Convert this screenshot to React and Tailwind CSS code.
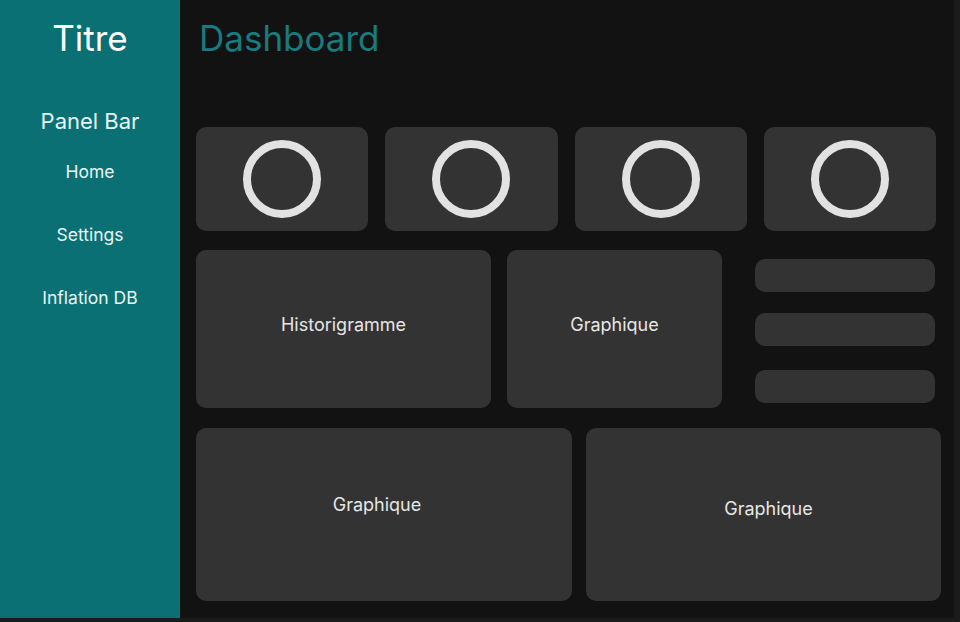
import React from "react";

const Ring = () => (
  <svg width="80" height="80" viewBox="0 0 80 80">
    <circle cx="40" cy="40" r="35" fill="none" stroke="#e2e2e2" strokeWidth="8" />
  </svg>
);

const Card = ({ className = "", children }) => (
  <div className={"bg-[#333333] rounded-[10px] flex items-center justify-center text-[18px] text-[#e6e6e6] " + className}>
    {children}
  </div>
);

export default function App() {
  const links = ["Home", "Settings", "Inflation DB"];

  return (
    <div className="w-[960px] h-[622px] bg-[#1b1b1b] overflow-hidden" style={{ fontFamily: "Inter, 'Noto Sans', sans-serif" }}>
      <div className="flex w-[954px] h-[618px] bg-[#121212]">
        {/* sidebar */}
        <div className="w-[180px] shrink-0 bg-[#0a7074] flex flex-col items-center text-white">
          <div className="mt-[17px] text-[35px] leading-[42px]">Titre</div>
          <div className="mt-[48px] text-[22px] leading-[28px] text-[#e8f4f4]">Panel Bar</div>
          <div className="mt-[25px] flex flex-col items-center gap-[39px] text-[17.5px] leading-[24px] text-[#e8f4f4]">
            {links.map((l) => (
              <div key={l}>{l}</div>
            ))}
          </div>
        </div>

        {/* main */}
        <div className="flex-1 pl-4">
          <div className="mt-[17px] ml-[3px] text-[35px] leading-[42px] text-[#1a7a7e]">Dashboard</div>

          <div className="mt-[68px] w-[740px] grid grid-cols-4 gap-[17px]">
            {[0, 1, 2, 3].map((i) => (
              <Card key={i} className="h-[104px]">
                <Ring />
              </Card>
            ))}
          </div>

          <div className="mt-[19px] flex h-[158px]">
            <Card className="w-[295px] pb-[10px]">Historigramme</Card>
            <Card className="w-[215px] ml-[16px] pb-[10px]">Graphique</Card>
            <div className="ml-[33px] w-[180px] pt-[9px] flex flex-col">
              <div className="h-[33px] bg-[#333333] rounded-[10px]" />
              <div className="mt-[21px] h-[33px] bg-[#333333] rounded-[10px]" />
              <div className="mt-[24px] h-[33px] bg-[#333333] rounded-[10px]" />
            </div>
          </div>

          <div className="mt-[20px] flex h-[173px]">
            <Card className="w-[376px] pb-[21px] pr-[14px]">Graphique</Card>
            <Card className="w-[355px] ml-[14px] pb-[13px] pl-[10px]">Graphique</Card>
          </div>
        </div>
      </div>
    </div>
  );
}
